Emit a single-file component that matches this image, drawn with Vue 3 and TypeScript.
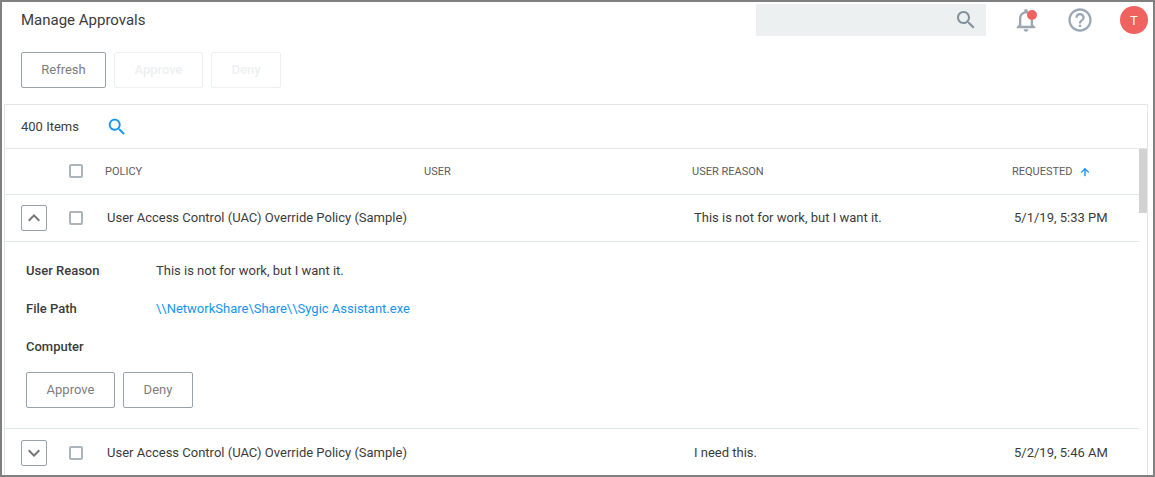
<script setup lang="ts">
interface Approval {
  policy: string
  user: string
  reason: string
  requested: string
  expanded: boolean
  filePath: string
}

const approvals: Approval[] = [
  {
    policy: 'User Access Control (UAC) Override Policy (Sample)',
    user: '',
    reason: 'This is not for work, but I want it.',
    requested: '5/1/19, 5:33 PM',
    expanded: true,
    filePath: '\\\\NetworkShare\\Share\\\\Sygic Assistant.exe',
  },
  {
    policy: 'User Access Control (UAC) Override Policy (Sample)',
    user: '',
    reason: 'I need this.',
    requested: '5/2/19, 5:46 AM',
    expanded: false,
    filePath: '',
  },
]

const searchPath =
  'M15.5 14h-.79l-.28-.27C15.41 12.59 16 11.11 16 9.5 16 5.91 13.09 3 9.5 3S3 5.91 3 9.5 5.91 16 9.5 16c1.61 0 3.09-.59 4.23-1.57l.27.28v.79l5 4.99L20.49 19l-4.99-5zm-6 0C7.01 14 5 11.99 5 9.5S7.01 5 9.5 5 14 7.01 14 9.5 11.99 14 9.5 14z'
</script>

<template>
  <div class="window">
    <header class="topbar">
      <h1 class="title">Manage Approvals</h1>
      <div class="search">
        <svg width="24" height="24" viewBox="0 0 24 24"><path :d="searchPath" /></svg>
      </div>
      <div class="bell">
        <svg width="28" height="28" viewBox="0 0 24 24">
          <path d="M12 22c1.1 0 2-.9 2-2h-4c0 1.1.9 2 2 2zm6-6v-5c0-3.07-1.63-5.64-4.5-6.32V4c0-.83-.67-1.5-1.5-1.5s-1.5.67-1.5 1.5v.68C7.64 5.36 6 7.92 6 11v5l-2 2v1h16v-1l-2-2zm-2 1H8v-6c0-2.48 1.51-4.5 4-4.5s4 2.02 4 4.5v6z" />
        </svg>
        <span class="dot"></span>
      </div>
      <svg class="help" width="28" height="28" viewBox="0 0 24 24">
        <path d="M11 18h2v-2h-2v2zm1-16C6.48 2 2 6.48 2 12s4.48 10 10 10 10-4.48 10-10S17.52 2 12 2zm0 18c-4.41 0-8-3.59-8-8s3.59-8 8-8 8 3.59 8 8-3.59 8-8 8zm0-14c-2.21 0-4 1.79-4 4h2c0-1.1.9-2 2-2s2 .9 2 2c0 2-3 1.75-3 5h2c0-2.25 3-2.5 3-5 0-2.21-1.79-4-4-4z" />
      </svg>
      <div class="avatar">T</div>
    </header>

    <div class="actions">
      <button class="btn refresh">Refresh</button>
      <button class="btn approve" disabled>Approve</button>
      <button class="btn deny" disabled>Deny</button>
    </div>

    <section class="panel">
      <div class="summary">
        <span class="count">400 Items</span>
        <svg width="22" height="22" viewBox="0 0 24 24"><path :d="searchPath" /></svg>
      </div>
      <div class="scroller">
        <div class="table">
          <div class="row head">
            <span></span>
            <span class="check"></span>
            <span>POLICY</span>
            <span>USER</span>
            <span>USER REASON</span>
            <span class="sorted">REQUESTED
              <svg width="12" height="12" viewBox="0 0 24 24"><path d="M4 12l1.41 1.41L11 7.83V20h2V7.83l5.58 5.59L20 12l-8-8-8 8z" /></svg>
            </span>
          </div>
          <template v-for="item in approvals" :key="item.requested">
            <div class="row item" :class="{ open: item.expanded }">
              <button class="toggle">
                <svg width="24" height="24" viewBox="0 0 24 24">
                  <path v-if="item.expanded" d="M12 8l-6 6 1.41 1.41L12 10.83l4.59 4.58L18 14z" />
                  <path v-else d="M16.59 8.59L12 13.17 7.41 8.59 6 10l6 6 6-6z" />
                </svg>
              </button>
              <span class="check"></span>
              <span class="cell">{{ item.policy }}</span>
              <span class="cell">{{ item.user }}</span>
              <span class="cell">{{ item.reason }}</span>
              <span class="cell">{{ item.requested }}</span>
            </div>
            <div v-if="item.expanded" class="detail">
              <dl>
                <dt>User Reason</dt>
                <dd>{{ item.reason }}</dd>
                <dt>File Path</dt>
                <dd><a>{{ item.filePath }}</a></dd>
                <dt>Computer</dt>
                <dd></dd>
              </dl>
              <div class="detail-actions">
                <button class="btn approve">Approve</button>
                <button class="btn deny">Deny</button>
              </div>
            </div>
          </template>
        </div>
        <div class="track"><div class="thumb"></div></div>
      </div>
    </section>
  </div>
</template>

<style>
body {
  margin: 0;
  overflow: hidden;
}
</style>

<style scoped>
.window {
  box-sizing: border-box;
  width: 1155px;
  height: 477px;
  border: 2px solid #808080;
  background: #fff;
  overflow: hidden;
  display: flex;
  flex-direction: column;
  font-family: Roboto, "Liberation Sans", sans-serif;
  font-size: 13px;
  color: #3c3c3c;
}
svg {
  display: block;
  flex: none;
}
.topbar {
  display: flex;
  align-items: center;
  height: 36px;
  flex: none;
  padding: 0 5px 0 19px;
}
.title {
  margin: 0;
  font-size: 15px;
  font-weight: 400;
}
.search {
  box-sizing: border-box;
  width: 230px;
  height: 32px;
  margin-left: auto;
  padding-right: 8px;
  display: flex;
  align-items: center;
  justify-content: flex-end;
  background: #ecf0f1;
  fill: #84919b;
}
.bell {
  position: relative;
  margin-left: 26px;
  fill: #9ba8b1;
}
.dot {
  position: absolute;
  left: 15px;
  top: 4px;
  width: 10px;
  height: 10px;
  border-radius: 50%;
  background: #f0625f;
}
.help {
  margin-left: 26px;
  fill: #9ba8b1;
}
.avatar {
  width: 28px;
  height: 28px;
  margin-left: 26px;
  border-radius: 50%;
  background: #f0625f;
  color: #fff;
  font-size: 13px;
  line-height: 29px;
  text-align: center;
}
.actions {
  display: flex;
  gap: 8px;
  padding: 14px 0 16px 19px;
  flex: none;
}
.btn {
  box-sizing: border-box;
  height: 36px;
  padding: 0;
  border: 1px solid #96a3ad;
  border-radius: 2px;
  background: #fff;
  color: #7d7d7d;
  font: 400 13px/34px Roboto, "Liberation Sans", sans-serif;
}
.btn:disabled {
  border-color: #ecf0f1;
  color: #ecf0f1;
  font-weight: 500;
}
.refresh {
  width: 85px;
}
.approve {
  width: 89px;
}
.deny {
  width: 70px;
}
.panel {
  flex: 1;
  width: 1142px;
  margin-left: 2px;
  border: 1px solid #e4e7e8;
  border-bottom: 0;
  min-height: 0;
}
.summary {
  display: flex;
  align-items: center;
  height: 43px;
  padding-left: 16px;
  border-bottom: 1px solid #e4e7e8;
}
.count {
  width: 85px;
}
.summary svg {
  fill: #1595f3;
}
.scroller {
  display: flex;
}
.table {
  width: 1134px;
}
.track {
  width: 8px;
}
.thumb {
  height: 64px;
  background: #d2d2d2;
}
.row {
  display: grid;
  grid-template-columns: 48px 36px 319px 268px 320px 1fr;
  align-items: center;
  padding-left: 16px;
  border-bottom: 1px solid #dfe6e6;
}
.head {
  height: 45px;
  font-size: 11px;
  color: #5c5c5c;
}
.head .check {
  margin-bottom: 1px;
}
.item {
  box-sizing: border-box;
  height: 48px;
}
.item.open {
  height: 47px;
}
.item.open .cell {
  padding-bottom: 1px;
}
.cell {
  padding-left: 2px;
  white-space: nowrap;
}
.check {
  box-sizing: border-box;
  width: 14px;
  height: 14px;
  border: 2px solid #adb5bc;
  border-radius: 2px;
}
.sorted {
  display: flex;
  align-items: center;
  gap: 6px;
}
.sorted svg {
  fill: #1595f3;
  stroke: #1595f3;
  stroke-width: 0.8;
}
.toggle {
  box-sizing: border-box;
  width: 26px;
  height: 26px;
  padding: 0;
  border: 1px solid #96a3ad;
  border-radius: 2px;
  background: #fff;
  display: flex;
  align-items: center;
  justify-content: center;
  fill: #757575;
}
.detail {
  box-sizing: border-box;
  height: 187px;
  padding: 9px 0 0 21px;
  border-bottom: 1px solid #dfe6e6;
}
dl {
  margin: 0;
  display: grid;
  grid-template-columns: 130px 1fr;
  grid-auto-rows: 38px;
  align-items: center;
}
dt {
  font-weight: 500;
}
dd {
  margin: 0;
}
dd a {
  color: #1595f3;
}
.detail-actions {
  display: flex;
  gap: 8px;
  margin-top: 7px;
}
</style>
